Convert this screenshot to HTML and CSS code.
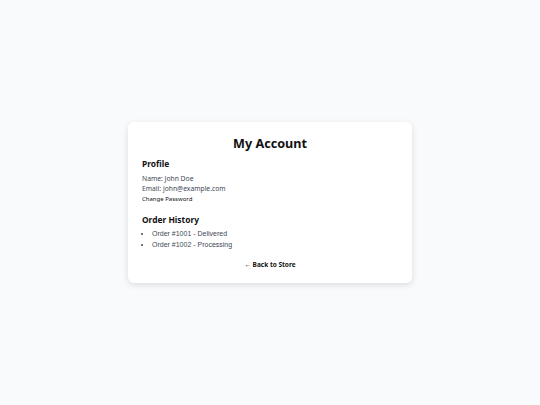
FILE: index.html
```html
<!DOCTYPE html>
<html lang="en">
<head>
    <meta charset="UTF-8" />
    <meta name="viewport" content="width=device-width, initial-scale=1.0" />
    <title>My Account</title>
    <link rel="stylesheet" href="styles.css">
</head>
<body>
    <main class="account">
        <h1>My Account</h1>

        <section class="profile">
            <h2>Profile</h2>
            <p>Name: John Doe</p>
            <p>Email: john@example.com</p>
            <button class="link-btn">Change Password</button>
        </section>

        <section class="orders">
            <h2>Order History</h2>
            <ul>
                <li>Order #1001 - Delivered</li>
                <li>Order #1002 - Processing</li>
            </ul>
        </section>

        <a class="back" href="#">&larr; Back to Store</a>
    </main>
</body>
</html>
```

FILE: styles.css
```css
body {
    font-family: "Noto Sans", sans-serif;
    background: #f9fafb;
    color: #111;
    margin: 0;
    min-height: 100vh;
    display: flex;
    align-items: center;
    justify-content: center;
}
.account {
    width: 256px;
    background: #fff;
    border-radius: 6px;
    padding: 13px 14px 12.5px;
    box-shadow: 0 2px 6px rgba(0,0,0,0.12);
    display: flex;
    flex-direction: column;
}
h1 {
    font-size: 12.6px;
    line-height: 18px;
    text-align: center;
    margin: 0;
}
h2 {
    font-size: 8.4px;
    line-height: 12px;
    margin: 0 0 3.5px;
}
.profile {
    margin-top: 5px;
}
.profile p {
    font-size: 6.75px;
    line-height: 10px;
    margin: 0;
    color: #404854;
}
.link-btn {
    display: block;
    font-family: inherit;
    font-size: 6px;
    line-height: 10px;
    background: none;
    border: none;
    padding: 0;
    color: #111;
    text-align: left;
    cursor: pointer;
}
.orders {
    margin-top: 10px;
}
.orders h2 {
    margin-bottom: 2.5px;
}
.orders ul {
    margin: 0;
    padding-left: 10px;
    font-family: "Liberation Sans", sans-serif;
    font-size: 7px;
    line-height: 11px;
    color: #404854;
}
.back {
    margin-top: 10px;
    align-self: center;
    font-size: 6.5px;
    line-height: 10px;
    font-weight: 700;
    color: #111;
    text-decoration: none;
}
```
